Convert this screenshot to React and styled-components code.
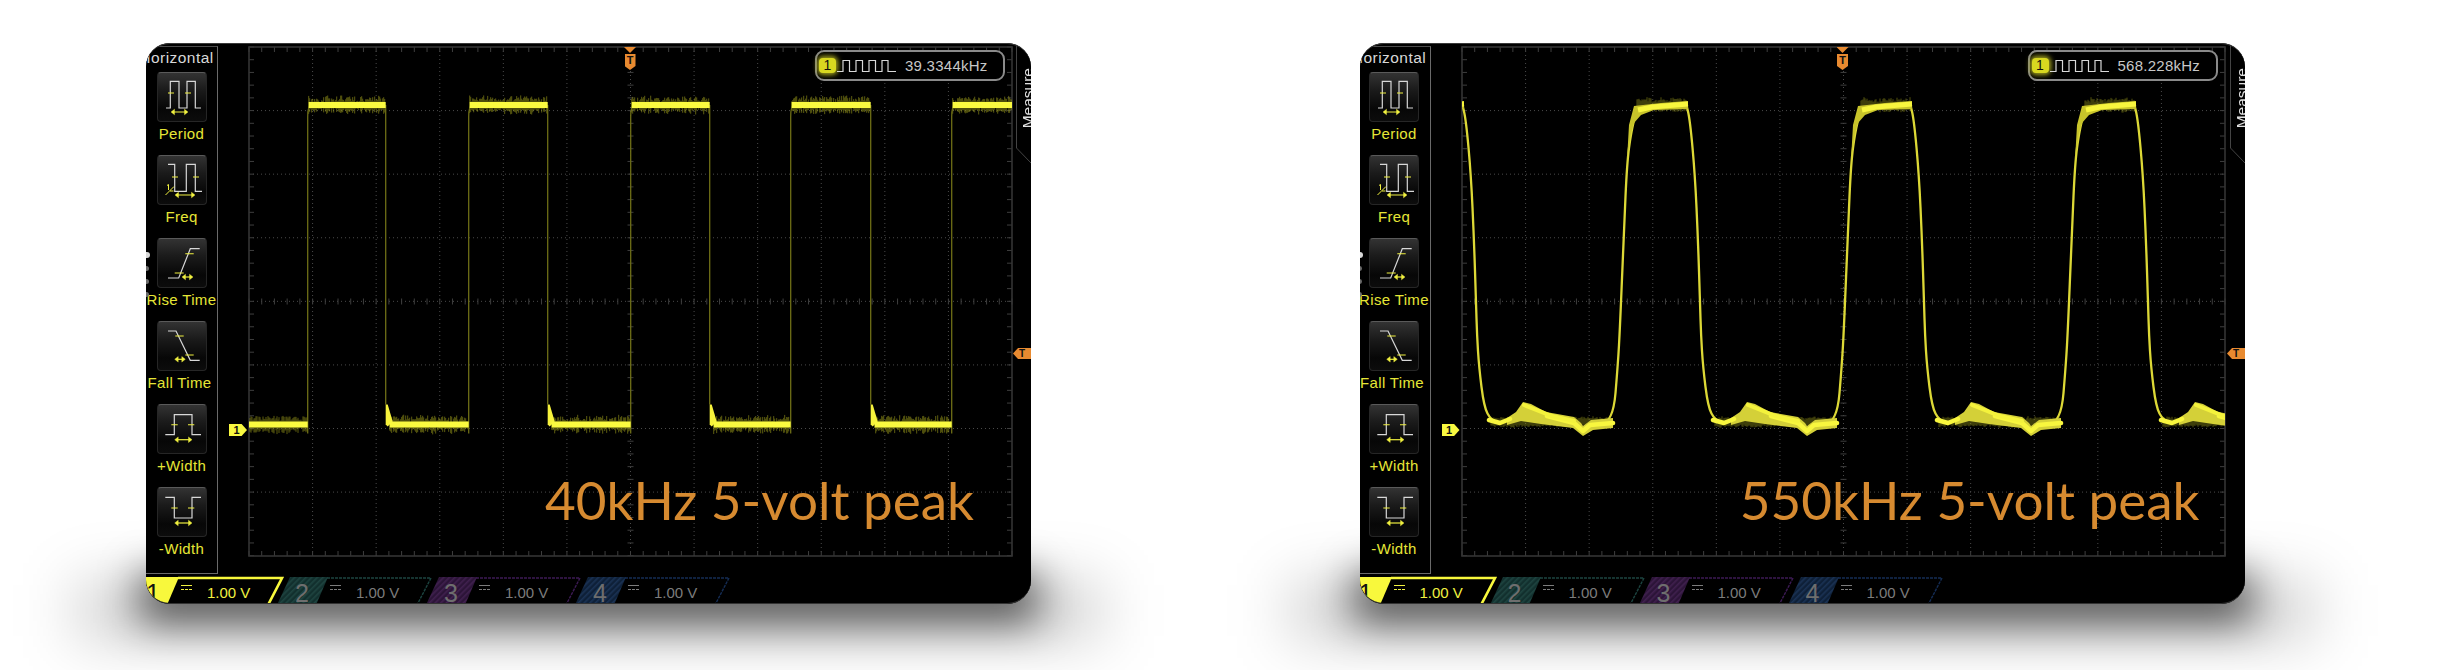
import React from "react";
import styled, { createGlobalStyle } from "styled-components";

const Global = createGlobalStyle`
  html, body { margin: 0; padding: 0; background: #fff; overflow: hidden; }
  body { font-family: "Liberation Sans", Arial, sans-serif; }
`;

const Page = styled.main`
  width: 2444px;
  height: 670px;
  box-sizing: border-box;
  padding: 43px 0 0 146px;
  display: flex;
  gap: 329px;
  align-items: flex-start;
  overflow: hidden;
  background: #fff;
  isolation: isolate;
`;
const Screen = styled.section`
  position: relative;
  width: 885px;
  height: 561px;
  flex: none;
  border-radius: 24px;
  background: #000;
  &::before {
    content: "";
    position: absolute;
    z-index: -1;
    left: -6px;
    right: -6px;
    top: 530px;
    height: 50px;
    background: rgba(0, 0, 0, 0.62);
    filter: blur(20px);
  }
  &::after {
    content: "";
    position: absolute;
    z-index: -1;
    left: -70px;
    right: -70px;
    top: 540px;
    height: 55px;
    background: rgba(0, 0, 0, 0.2);
    filter: blur(30px);
  }
`;
const Clip = styled.div`
  position: absolute;
  inset: 0;
  border-radius: 24px;
  overflow: hidden;
  border-top: 1px solid #3a3a3a;
  border-bottom: 1px solid #333;
  box-sizing: border-box;
  background: #000;
`;
const Inner = styled.div`
  position: relative;
  height: 100%;
  margin-left: ${(p) => p.$shift}px;
  padding-top: 2px;
  box-sizing: border-box;
`;
const Main = styled.div`
  display: flex;
  height: 531px;
`;
const Sidebar = styled.aside`
  position: relative;
  width: 71px;
  height: 526px;
  flex: none;
  box-sizing: content-box;
  border-top: 1px solid #4c4c4c;
  border-right: 1px solid #6a6a6a;
  border-bottom: 1px solid #6a6a6a;
  display: flex;
  flex-direction: column;
  align-items: center;
`;
const SideTitle = styled.div`
  height: 25px;
  line-height: 21px;
  font-size: 15.5px;
  letter-spacing: 0.45px;
  color: #d8d8d8;
  white-space: nowrap;
  transform: translateX(-5px);
`;
const Measure = styled.div`
  display: flex;
  flex-direction: column;
  align-items: center;
  width: 100%;
  height: 83px;
  flex: none;
`;
const MeasureButton = styled.div`
  width: 50px;
  height: 50px;
  flex: none;
  box-sizing: border-box;
  border-radius: 4px;
  border: 1px solid #262626;
  border-top-color: #5a5a5a;
  background: linear-gradient(#333 0%, #1b1b1b 35%, #070707 75%, #0c0c0c 100%);
  svg { display: block; margin: -1px; }
`;
const MeasureLabel = styled.div`
  height: 32px;
  line-height: 23px;
  font-size: 15px;
  letter-spacing: 0.35px;
  color: #e6e636;
  white-space: nowrap;
  transform: translateX(${(p) => p.$nudge || 0}px);
`;
const SideDots = styled.div`
  position: absolute;
  left: -2px;
  top: 205px;
  display: flex;
  flex-direction: column;
  gap: 8px;
`;
const SideDot = styled.span`
  width: ${(p) => (p.$big ? 6 : 5)}px;
  height: ${(p) => (p.$big ? 6 : 5)}px;
  border-radius: 50%;
  background: ${(p) => (p.$big ? "#d8d8d8" : "#6a6a6a")};
`;
const Plot = styled.svg`
  display: block;
  margin: 0 0 0 30px;
  flex: none;
  overflow: hidden;
`;
const TabBar = styled.div`
  display: flex;
  height: 28px;
  margin-left: -18px;
`;
const Tab = styled.div`
  position: relative;
  width: 149px;
  flex: none;
  height: 28px;
  display: flex;
  align-items: center;
  padding-left: 18px;
  box-sizing: border-box;
  color: ${(p) => p.$text};
  svg { position: absolute; left: 0; top: 0; overflow: visible; }
`;
const TabDigit = styled.span`
  position: relative;
  width: 14px;
  font-size: 25px;
  line-height: 28px;
  text-align: center;
  color: ${(p) => p.$color};
  margin-top: 3px;
`;
const Coupling = styled.span`
  position: relative;
  width: 11px;
  height: 3px;
  margin: -7px 0 0 21px;
  border-top: 1px solid currentColor;
  border-bottom: 1px dashed currentColor;
`;
const TabValue = styled.span`
  position: relative;
  margin-left: 15px;
  font-size: 15px;
  white-space: nowrap;
  margin-top: 2px;
`;
const FreqPill = styled.div`
  position: absolute;
  left: 669px;
  top: 6px;
  width: 190px;
  height: 31px;
  box-sizing: border-box;
  border: 2.5px solid #8a8a8a;
  border-radius: 9px;
  display: flex;
  align-items: center;
  padding-left: 2px;
  background: #000;
`;
const FreqBadge = styled.span`
  width: 17px;
  height: 15px;
  border-radius: 4px;
  background: #d8d820;
  box-shadow: 0 0 5px 2px #a8a820;
  color: #111;
  font-size: 14px;
  line-height: 15px;
  text-align: center;
`;
const FreqValue = styled.span`
  margin-left: 9px;
  font-size: 15px;
  letter-spacing: 0.25px;
  color: #c8c8c8;
  white-space: nowrap;
`;
const WaveIcon = styled.svg`
  display: block;
  flex: none;
  margin-left: 1px;
`;
const Caption = styled.div`
  position: absolute;
  right: ${(p) => p.$right}px;
  top: 421px;
  font-family: Lato, "Open Sans", sans-serif;
  font-size: 53px;
  line-height: 70px;
  font-weight: 400;
  color: #d68a30;
  white-space: nowrap;
`;
const TopTrigger = styled.div`
  position: absolute;
  left: 478px;
  top: 3px;
  width: 12px;
  display: flex;
  flex-direction: column;
  align-items: center;
  gap: 1px;
`;
const TopTriggerArrow = styled.span`
  width: 12px;
  height: 6px;
  background: #e88a30;
  clip-path: polygon(0 0, 100% 0, 50% 100%);
`;
const TopTriggerBody = styled.span`
  width: 11px;
  height: 16px;
  background: #e88a30;
  color: #111;
  font-size: 11px;
  font-weight: 700;
  line-height: 12px;
  text-align: center;
  clip-path: polygon(0 0, 100% 0, 100% 75%, 50% 100%, 0 75%);
`;
const ChannelFlag = styled.div`
  position: absolute;
  left: 83px;
  top: 380px;
  width: 18px;
  height: 12px;
  background: #f8f840;
  color: #111;
  font-size: 11px;
  font-weight: 700;
  line-height: 12px;
  padding-right: 3px;
  box-sizing: border-box;
  text-align: center;
  clip-path: polygon(0 0, 70% 0, 100% 50%, 70% 100%, 0 100%);
`;
const MeasureTab = styled.div`
  position: absolute;
  right: 0;
  top: 0;
  width: 15px;
  height: 119px;
  svg { position: absolute; left: 0; top: 0; }
`;
const MeasureTabText = styled.span`
  position: absolute;
  left: 3px;
  top: 24px;
  writing-mode: vertical-rl;
  transform: rotate(180deg);
  font-size: 15.5px;
  line-height: 17px;
  color: #e0e0e0;
  white-space: nowrap;
`;
const SideTrigger = styled.div`
  position: absolute;
  right: 0;
  top: 304px;
  width: 18px;
  height: 11px;
  background: #e88a30;
  color: #111;
  font-size: 10px;
  font-weight: 700;
  line-height: 11px;
  text-align: center;
  clip-path: polygon(0 50%, 28% 0, 100% 0, 100% 100%, 28% 100%);
`;

const W = "#d8d8d8";
const Y = "#f0f040";
const Arrow = ({ y, a, b }) => (
  <g stroke={Y} fill={Y}>
    <path d={`M${a + 2} ${y}H${b - 2}`} strokeWidth="1.2" />
    <path d={`M${a} ${y}l3.5 -2.8v5.6zM${b} ${y}l-3.5 -2.8v5.6z`} strokeWidth="0.4" />
  </g>
);
const Icon = ({ line, ticks, arrow, extra }) => (
  <svg width="50" height="50" viewBox="0 0 50 50" fill="none">
    <path d={line} stroke={W} strokeWidth="1.2" />
    <path d={ticks} stroke={Y} strokeWidth="1.1" />
    <Arrow {...arrow} />
    {extra}
  </svg>
);

const measures = [
  { label: "Period", line: "M9 36H13.3V9.3H22V36H30V9.3H38.3V36H44", ticks: "M11 21H17M28 21H34", arrow: { y: 40, a: 14, b: 31 } },
  {
    label: "Freq", line: "M11 9.3H17.7V36.3H29.3V9.3H38.3V36.3H45", ticks: "M15 22H21M36 22H42", arrow: { y: 40, a: 18, b: 38 },
    extra: <path d="M10 30.5l1.5-1V35M8.5 40L17 31.5M13 36h3.5" stroke={Y} strokeWidth="1" />,
  },
  { label: "Rise Time", line: "M11 40H21.7L33.3 10.7H42.7", ticks: "M28.3 15.7H36.7M17.7 35H26.7", arrow: { y: 39, a: 25, b: 36 } },
  { label: "Fall Time", nudge: -2, line: "M11 10H19L33.3 39.3H42.7", ticks: "M18.3 15H26.7M28.3 34H36.7", arrow: { y: 38.3, a: 17.7, b: 28.3 } },
  { label: "+Width", line: "M8.3 30.7H17.3V10.7H35V30.7H44", ticks: "M14.3 20.7H20.7M31 20.7H37.3", arrow: { y: 35.7, a: 17.7, b: 35 } },
  { label: "-Width", line: "M8.3 10.3H17.3V31H35V10.3H44", ticks: "M14.3 21H20.7M31 21H37.3", arrow: { y: 36, a: 17.7, b: 35 } },
];

const PW = 763;
const PH = 509;
const DIV = PW / 12;
const SUB = DIV / 5;

const range = (n) => Array.from({ length: n }, (_, i) => i);

function Grid() {
  let dotted = "";
  range(11).forEach((i) => { dotted += `M${DIV * (i + 1)} 0V${PH}`; });
  range(7).forEach((i) => { dotted += `M0 ${DIV * (i + 1)}H${PW}`; });
  let ticks = "";
  range(61).forEach((i) => {
    const x = i * SUB;
    ticks += `M${x} 0v5M${x} ${PH}v-5M${x} ${PH / 2 - 3}v6`;
  });
  range(41).forEach((i) => {
    const y = i * SUB;
    ticks += `M0 ${y}h5M${PW} ${y}h-5M${PW / 2 - 3} ${y}h6`;
  });
  return (
    <g fill="none">
      <path d={dotted} stroke="#4a4a4a" strokeDasharray="1 3" />
      <path d={ticks} stroke="#3e3e3e" />
      <rect x="0" y="0" width={PW} height={PH} stroke="#343434" strokeWidth="1.6" />
    </g>
  );
}

function rng(seed) {
  let s = seed;
  return () => {
    s = (s * 16807) % 2147483647;
    return (s - 1) / 2147483646;
  };
}

function noiseBand(r, x1, x2, cy, amp) {
  let d = "";
  for (let x = x1; x < x2; x += 1) {
    const a = r() * amp + 3;
    const skew = r() * 2 - 1;
    d += `M${x} ${(cy - a + skew).toFixed(1)}V${(cy + a + skew).toFixed(1)}`;
  }
  return d;
}

function SquareTrace({ uid }) {
  const ox = 248.3;
  const oy = 47;
  const hi = 105 - oy;
  const lo = 424.5 - oy;
  const rises = [307, 468, 630, 790, 951].map((v) => v - ox);
  const falls = [385, 547, 709, 870].map((v) => v - ox);
  const r = rng(4711);
  let noise = "";
  const bands = [];
  const edges = [];
  const wedges = [];
  const segs = [[0, rises[0], lo]];
  rises.forEach((x, i) => {
    const f = falls[i] ?? PW;
    segs.push([x + 1, f, hi]);
    if (falls[i] !== undefined) segs.push([f + 4, rises[i + 1], lo]);
  });
  segs.forEach(([a, b, y], i) => {
    noise += noiseBand(r, a, b, y, 6);
    bands.push(<rect key={i} x={a} y={y - 3} width={b - a} height={6} />);
  });
  rises.forEach((x) => {
    edges.push(`M${x} ${lo + 9}V${hi + 12}Q${x} ${hi} ${x + 4} ${hi - 2}`);
  });
  falls.forEach((x, i) => {
    edges.push(`M${x} ${hi}V${lo - 20}`);
    wedges.push(
      <path key={i} d={`M${x} ${lo - 20}L${x + 2} ${lo - 20}L${x + 7} ${lo - 3}L${x + 2} ${lo + 2}L${x} ${lo}Z`} />
    );
  });
  return (
    <g>
      <path d={noise} stroke="#9a9a1c" strokeWidth="1" opacity="0.6" filter={`url(#soft-${uid})`} />
      <path d={edges.join("")} stroke="#6e6e16" strokeWidth="1.3" fill="none" />
      <g fill="#f6f23c">{wedges}</g>
      <g fill="#fafa40">{bands}</g>
    </g>
  );
}

const shape = [
  [0, 103], [4, 120], [9, 175], [12, 240], [14, 302], [15, 335], [17, 367], [22, 407], [29, 420], [39, 423],
  [49, 419], [61, 409], [79, 417], [112, 423], [121, 432], [127, 425], [151, 423], [156, 363], [158, 327],
  [162, 230], [165, 163], [169, 133], [174, 112], [186, 107], [224, 104],
];
const riseBand = "M165 160L167 125L172 106L199 103L226 101L226 109L192 110L179 115L172 123L169 133Z";
const bumpBand = "M45 418L54 412L61 402L69 404L84 412L112 417L119 423L121 426L129 420L151 418L151 428L131 430L121 436L111 428L79 424L59 421L45 425Z";
const lowCore = "M27 420L38 423L48 419M85 416L112 423L121 431L128 425L151 423";
const topCore = "M176 110L190 107L226 104";

function smooth(points) {
  let d = `M${points[0][0]} ${points[0][1]}`;
  for (let i = 1; i < points.length - 1; i += 1) {
    const mx = (points[i][0] + points[i + 1][0]) / 2;
    const my = (points[i][1] + points[i + 1][1]) / 2;
    d += `Q${points[i][0]} ${points[i][1]} ${mx} ${my}`;
  }
  const l = points[points.length - 1];
  return `${d}L${l[0]} ${l[1]}`;
}

function RoundedTrace({ uid }) {
  const period = 224;
  const r = rng(90210);
  const pts = [];
  [-1, 0, 1, 2, 3].forEach((k) => shape.forEach(([x, y]) => pts.push([x + k * period, y - 47])));
  const periods = [-1, 0, 1, 2, 3];
  let noise = "";
  periods.forEach((k) => {
    noise += noiseBand(r, 175 + k * period, 225 + k * period, 105 - 47, 4);
    noise += noiseBand(r, 29 + k * period, 151 + k * period, 422 - 47, 2);
  });
  return (
    <g>
      <path d={noise} stroke="#98981c" strokeWidth="1" opacity="0.55" filter={`url(#soft-${uid})`} />
      <path d={smooth(pts)} fill="none" stroke="#dcd836" strokeWidth="2.3" strokeLinejoin="round" />
      {periods.map((k) => (
        <g key={k} transform={`translate(${k * period} -47)`}>
          <path d={riseBand} fill="#c8c42c" filter={`url(#soft-${uid})`} />
          <path d={bumpBand} fill="#d4d038" filter={`url(#soft-${uid})`} />
          <path d={lowCore} stroke="#f8f63e" strokeWidth="4.5" fill="none" strokeLinejoin="round" strokeLinecap="round" />
          <path d="M62 405L90 416L112 421" stroke="#f4f23c" strokeWidth="4" fill="none" strokeLinecap="round" />
          <path d={topCore} stroke="#f8f63e" strokeWidth="5" fill="none" />
        </g>
      ))}
    </g>
  );
}

const channels = [
  { n: 1, text: "#f0f040", digit: "#111", edge: "#f8f83c", width: 2.6, solid: true },
  { n: 2, text: "#7c7c7c", digit: "#6e6e6e", edge: "#1c4440", a: "#12302e", b: "#1e4440" },
  { n: 3, text: "#7c7c7c", digit: "#6e6e6e", edge: "#3c1a54", a: "#2c1438", b: "#40204e" },
  { n: 4, text: "#7c7c7c", digit: "#6e6e6e", edge: "#142c54", a: "#0e2038", b: "#1a3254" },
];

function Channel({ c, uid }) {
  const pid = `hatch-${uid}-${c.n}`;
  return (
    <Tab $text={c.text}>
      <svg width="149" height="28" viewBox="0 0 149 28" fill="none">
        {!c.solid && (
          <defs>
            <pattern id={pid} width="4" height="4" patternUnits="userSpaceOnUse" patternTransform="rotate(45)">
              <rect width="4" height="4" fill={c.a} />
              <rect width="1.6" height="4" fill={c.b} />
            </pattern>
          </defs>
        )}
        <path d="M0 28L13 0H51L39 28Z" fill={c.solid ? c.edge : `url(#${pid})`} />
        <path d="M50 1H154L140 28" stroke={c.edge} strokeWidth={c.width || 1.4} strokeDasharray={c.solid ? undefined : "3 1"} />
      </svg>
      <TabDigit $color={c.digit}>{c.n}</TabDigit>
      <Coupling />
      <TabValue>1.00 V</TabValue>
    </Tab>
  );
}

function Scope({ uid, shift, freq, caption, captionRight, rounded }) {
  return (
    <Screen>
      <Clip>
        <Inner $shift={shift}>
          <Main>
            <Sidebar>
              <SideTitle>Horizontal</SideTitle>
              {measures.map((m) => (
                <Measure key={m.label}>
                  <MeasureButton>
                    <Icon line={m.line} ticks={m.ticks} arrow={m.arrow} extra={m.extra} />
                  </MeasureButton>
                  <MeasureLabel $nudge={m.nudge}>{m.label}</MeasureLabel>
                </Measure>
              ))}
              <SideDots>
                <SideDot $big />
                <SideDot />
                <SideDot />
                <SideDot />
              </SideDots>
            </Sidebar>
            <Plot width={PW + 2} height={PH + 2} viewBox={`-1 -1 ${PW + 2} ${PH + 2}`}>
              <defs>
                <clipPath id={`plot-${uid}`}>
                  <rect x="0" y="-10" width={PW} height={PH + 20} />
                </clipPath>
                <filter id={`soft-${uid}`} x="-5%" y="-5%" width="110%" height="110%">
                  <feGaussianBlur stdDeviation="0.7" />
                </filter>
              </defs>
              <Grid />
              <g clipPath={`url(#plot-${uid})`}>
                {rounded ? <RoundedTrace uid={uid} /> : <SquareTrace uid={uid} />}
              </g>
            </Plot>
          </Main>
          <TabBar>
            {channels.map((c) => (
              <Channel key={c.n} c={c} uid={uid} />
            ))}
          </TabBar>
          <TopTrigger>
            <TopTriggerArrow />
            <TopTriggerBody>T</TopTriggerBody>
          </TopTrigger>
          <ChannelFlag>1</ChannelFlag>
          <FreqPill>
            <FreqBadge>1</FreqBadge>
            <WaveIcon width="59" height="14" viewBox="0 0 59 14" fill="none">
              <path d="M0 12.5H6V1.5H12.5V12.5H19V1.5H25.5V12.5H32V1.5H38.5V12.5H45V1.5H51V12.5H59" stroke="#d8d8d8" strokeWidth="1.2" />
            </WaveIcon>
            <FreqValue>{freq}</FreqValue>
          </FreqPill>
          <Caption $right={captionRight}>{caption}</Caption>
        </Inner>
        <MeasureTab>
          <svg width="15" height="119" viewBox="0 0 15 119" fill="none">
            <path d="M0.5 0V104L15 119" stroke="#444" />
          </svg>
          <MeasureTabText>Measure</MeasureTabText>
        </MeasureTab>
        <SideTrigger>T</SideTrigger>
      </Clip>
    </Screen>
  );
}

export default function App() {
  return (
    <Page>
      <Global />
      <Scope uid="a" shift={0} freq="39.3344kHz" caption="40kHz 5-volt peak" captionRight={57} />
      <Scope uid="b" shift={-1.5} freq="568.228kHz" caption="550kHz 5-volt peak" captionRight={45.5} rounded />
    </Page>
  );
}
